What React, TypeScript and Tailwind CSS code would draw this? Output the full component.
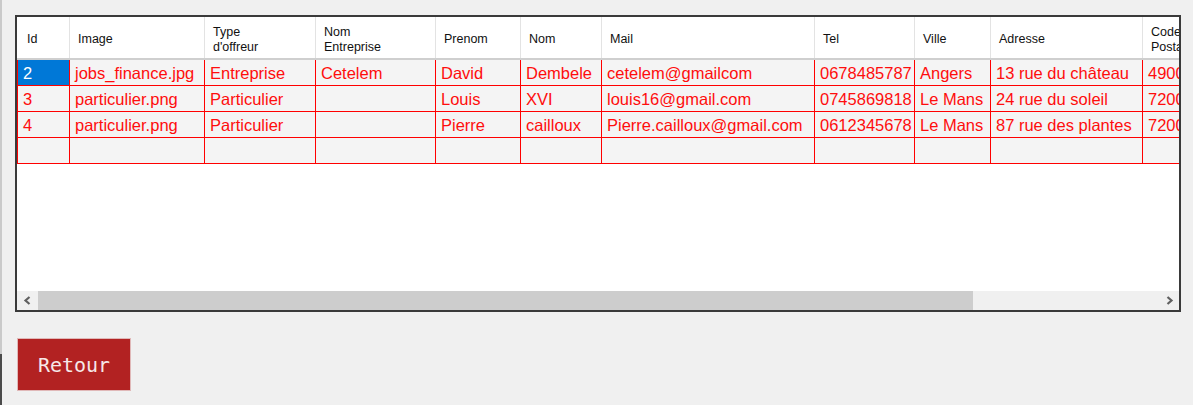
import React from "react";

type Col = { key: string; label: string[]; w: number };

const cols: Col[] = [
  { key: "id", label: ["Id"], w: 53 },
  { key: "image", label: ["Image"], w: 135 },
  { key: "type", label: ["Type", "d'offreur"], w: 111 },
  { key: "nomEnt", label: ["Nom", "Entreprise"], w: 120 },
  { key: "prenom", label: ["Prenom"], w: 85 },
  { key: "nom", label: ["Nom"], w: 81 },
  { key: "mail", label: ["Mail"], w: 213 },
  { key: "tel", label: ["Tel"], w: 100 },
  { key: "ville", label: ["Ville"], w: 76 },
  { key: "adresse", label: ["Adresse"], w: 152 },
  { key: "cp", label: ["Code", "Postal"], w: 100 },
];

const rows: string[][] = [
  ["2", "jobs_finance.jpg", "Entreprise", "Cetelem", "David", "Dembele", "cetelem@gmailcom", "0678485787", "Angers", "13 rue du château", "49000"],
  ["3", "particulier.png", "Particulier", "", "Louis", "XVI", "louis16@gmail.com", "0745869818", "Le Mans", "24 rue du soleil", "72000"],
  ["4", "particulier.png", "Particulier", "", "Pierre", "cailloux", "Pierre.cailloux@gmail.com", "0612345678", "Le Mans", "87 rue des plantes", "72000"],
  ["", "", "", "", "", "", "", "", "", "", ""],
];

export default function App() {
  return (
    <div className="w-[1193px] h-[405px] bg-[#f0f0f0] flex overflow-hidden">
      <div className="w-[2px] flex flex-col shrink-0">
        <div className="flex-1 bg-[#cacaca]" />
        <div className="h-[51px] bg-[#4b4b4b]" />
      </div>
      <div className="flex-1 pl-[13px] pt-[15px] flex flex-col items-start">
        <div className="w-[1166px] h-[297px] border-2 border-[#3a3a3a] bg-white flex flex-col">
          <div className="flex-1 overflow-hidden">
            <div className="w-[1226px] flex flex-col">
              {/* header */}
              <div
                className="flex h-[43px] bg-white border-b-2 border-[#cfcfcf] text-[12.5px] leading-[15px] text-[#111]"
                style={{ fontFamily: '"Liberation Sans", Arial, sans-serif' }}
              >
                {cols.map((c, i) => (
                  <div
                    key={c.key}
                    className={`shrink-0 h-full flex flex-col justify-center pt-[4px] border-r border-[#e3e3e3] ${
                      i === 0 ? "pl-[10px]" : "pl-[8px]"
                    }`}
                    style={{ width: c.w }}
                  >
                    {c.label.map((l) => (
                      <span key={l} className="whitespace-nowrap">
                        {l}
                      </span>
                    ))}
                  </div>
                ))}
              </div>
              {/* data rows */}
              {rows.map((r, ri) => (
                <div
                  key={ri}
                  className="flex h-[26px] border-b border-[#ff0000] bg-[#f4f4f4] text-[16.5px] text-[#ff0d0d]"
                  style={{ fontFamily: '"Liberation Sans", Arial, sans-serif' }}
                >
                  {cols.map((c, ci) => {
                    const selected = ri === 0 && ci === 0;
                    return (
                      <div
                        key={c.key}
                        className={`shrink-0 h-full flex items-center pt-[2px] whitespace-nowrap overflow-hidden border-r border-[#ff0000] ${
                          ci === 0 ? "border-l pl-[5px]" : "pl-[5px]"
                        } ${selected ? "bg-[#0078d7] text-white" : ""}`}
                        style={{ width: c.w }}
                      >
                        {r[ci]}
                      </div>
                    );
                  })}
                </div>
              ))}
            </div>
          </div>
          {/* horizontal scrollbar */}
          <div className="h-[19px] flex bg-[#f0f0f0] shrink-0">
            <div className="w-[21px] flex items-center justify-center">
              <svg width="9" height="9" viewBox="0 0 9 9">
                <polyline points="6.5,1 2.5,4.5 6.5,8" fill="none" stroke="#606060" strokeWidth="2.2" />
              </svg>
            </div>
            <div className="w-[935px] bg-[#cdcdcd]" />
            <div className="flex-1" />
            <div className="w-[19px] flex items-center justify-center">
              <svg width="9" height="9" viewBox="0 0 9 9">
                <polyline points="2.5,1 6.5,4.5 2.5,8" fill="none" stroke="#606060" strokeWidth="2.2" />
              </svg>
            </div>
          </div>
        </div>
        <button
          className="mt-[26px] ml-[2px] w-[114px] h-[53px] bg-[#b22222] border border-[#e0b8b8] text-[#f6e8e8] text-[20px] flex items-center justify-center"
          style={{ fontFamily: '"DejaVu Sans Mono", "Liberation Mono", monospace' }}
        >
          Retour
        </button>
      </div>
    </div>
  );
}
